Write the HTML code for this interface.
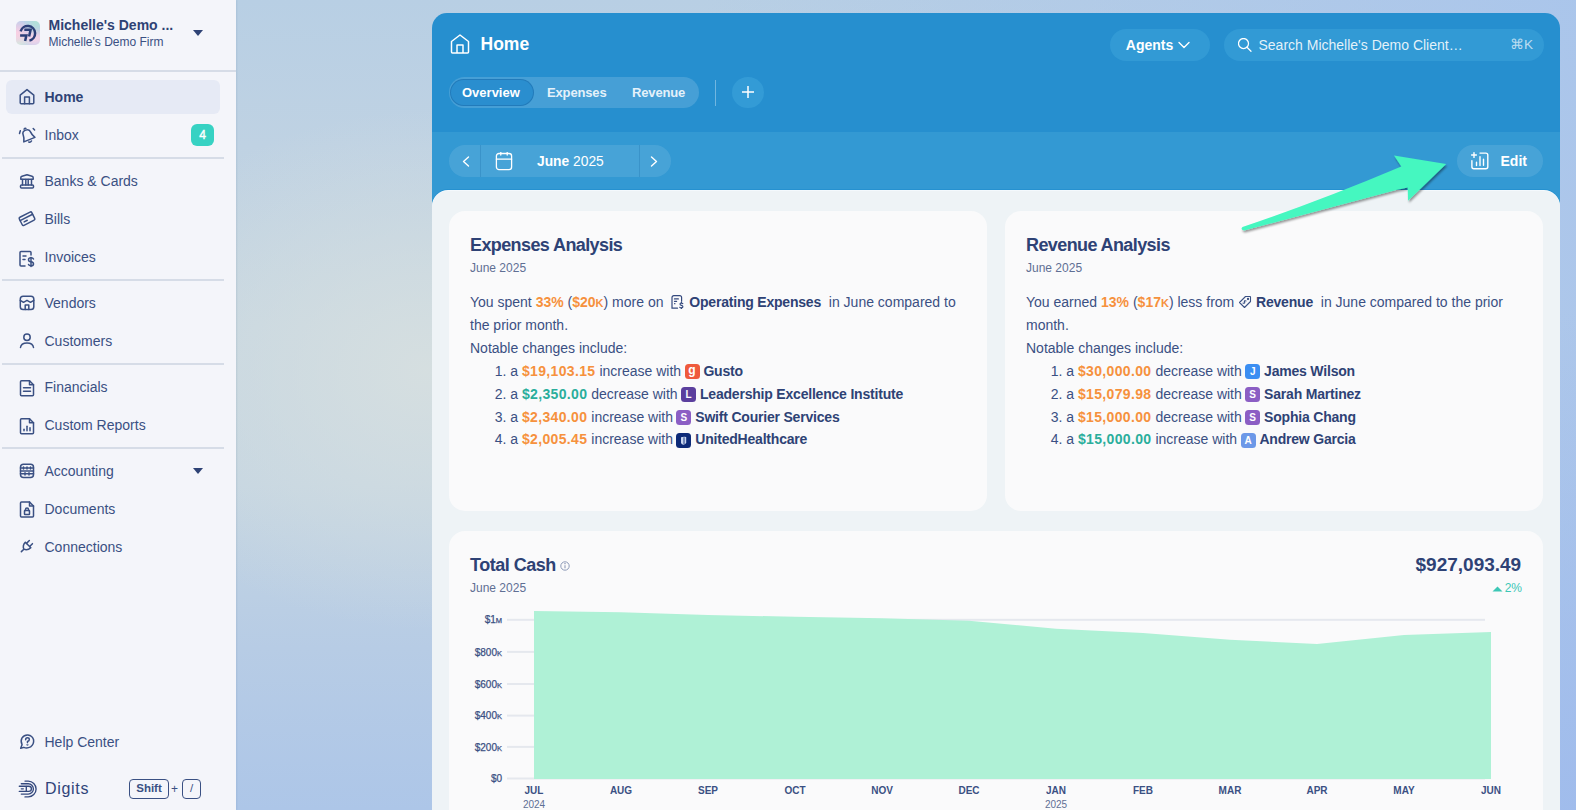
<!DOCTYPE html>
<html><head><meta charset="utf-8">
<style>
*{box-sizing:border-box;margin:0;padding:0}
html,body{width:1576px;height:810px;overflow:hidden}
body{font-family:"Liberation Sans",sans-serif;color:#344a7c;position:relative;
background:#bccfe3}
.bg{position:absolute;left:236px;top:0;width:1340px;height:810px;
background:
radial-gradient(ellipse 500px 500px at 1340px 810px, rgba(158,186,236,0.8) 0%, rgba(158,186,236,0) 100%),
linear-gradient(90deg, rgba(168,196,236,0) 35%, rgba(168,196,236,0.85) 100%),
radial-gradient(ellipse 330px 260px at 190px 370px, rgba(214,223,224,0.95) 0%, rgba(214,223,224,0) 100%),
linear-gradient(180deg,#b8cfe4 0%,#bfd2e3 18%,#c6d6e1 40%,#c4d5e2 60%,#b7cce5 80%,#adc6e8 100%);}
.bgr{position:absolute;left:1560px;top:0;width:16px;height:810px;background:linear-gradient(180deg,#b2c9e8,#a5bfea 50%,#9fbaec)}
.side{position:absolute;left:0;top:0;width:236px;height:810px;background:#f4f5fa;box-shadow:1px 0 1.5px rgba(70,110,150,0.12)}
.abs{position:absolute}
.hr{position:absolute;left:2px;width:222px;height:2px;background:#d6dce7}
.nav{position:absolute;left:44.5px;font-size:14px;color:#3a5083;line-height:14px;white-space:nowrap}
.ico{position:absolute;left:18px;width:18px;height:18px}
.panel{position:absolute;left:432px;top:13px;width:1128px;height:820px;border-radius:15px 15px 0 0;background:#268fcf;overflow:hidden}
.band{position:absolute;left:0;top:119px;width:1128px;height:80px;background:#3399d3}
.content{position:absolute;left:0;top:178px;width:1128px;height:700px;background:#eef3f6;border-radius:16px 16px 0 0;box-shadow:0 -1px 0 rgba(255,255,255,0.95),0 -2px 0 #2691d0}
.card{position:absolute;background:#fafafb;border-radius:16px}
.w{color:#fff}
.ttl{position:absolute;font-size:18px;line-height:18px;font-weight:bold;color:#2e4275;letter-spacing:-0.6px;white-space:nowrap}
.sub{position:absolute;font-size:12px;line-height:12px;color:#5f6f94;white-space:nowrap}
.body{position:absolute;font-size:14px;line-height:22.9px;color:#3a5083;white-space:nowrap}
.body b{font-weight:bold}
.o{color:#f6913d}
.g{color:#2aae9c}
.n{color:#2e4275;letter-spacing:-0.2px}
.li{padding-left:24.7px}
.li .o,.li .g{letter-spacing:0.35px}
.av{display:inline-block;overflow:hidden;width:15px;height:15px;margin-left:-0.5px;border-radius:3.5px;color:#fff;font-size:10px;font-weight:bold;line-height:15px;text-align:center;vertical-align:-3.3px}
.ic{vertical-align:-2px}

.kbd{border:1.3px solid #3a5083;border-radius:4px;font-size:11.5px;font-weight:bold;color:#3a5083;text-align:center;line-height:17px}
</style></head><body>
<div class="bg"></div>

<div class="side">
  <div class="abs" style="left:16.3px;top:21px;width:23.6px;height:23.8px;border-radius:5px;overflow:hidden;background:
radial-gradient(circle at 85% 5%, rgba(176,226,214,0.95) 0%, rgba(176,226,214,0) 45%),
radial-gradient(circle at 5% 50%, rgba(250,208,226,1) 0%, rgba(250,208,226,0) 55%),
radial-gradient(circle at 10% 95%, rgba(206,236,222,1) 0%, rgba(206,236,222,0) 40%),
radial-gradient(circle at 75% 70%, rgba(245,212,232,1) 0%, rgba(245,212,232,0) 45%),
linear-gradient(180deg,#bcd0ec 0%,#c6c8ec 40%,#ead2e8 70%,#c9d0ee 100%)">
    <svg width="24" height="24" viewBox="0 0 24 24" style="position:absolute;left:0;top:0" fill="none" stroke="#2c3f78" stroke-width="2.5"><path d="M4.6 10.3 A7.4 7.4 0 1 1 13.4 19.6"/><path d="M8.3 8.8 H14.6 L13.1 15.6"/><path d="M4.1 14.4 H10.4 L9.1 20"/></svg>
  </div>
  <div class="abs" style="left:48.5px;top:17.95px;font-size:14px;font-weight:bold;color:#2e4275;line-height:14px;white-space:nowrap">Michelle's Demo ...</div>
  <div class="abs" style="left:48.5px;top:35.84px;font-size:12px;color:#3a5083;line-height:12px;white-space:nowrap">Michelle's Demo Firm</div>
  <svg class="abs" style="left:192px;top:29px" width="12" height="8" viewBox="0 0 12 8"><path d="M1 1 L11 1 L6 7 Z" fill="#2e4275"/></svg>
  <div class="abs" style="left:0;top:70px;width:236px;height:2px;background:#d6dce7"></div>
  <div class="abs" style="left:6px;top:80px;width:214px;height:34px;border-radius:6px;background:#e6eaf5"></div>
  <div class="hr" style="top:157px"></div>
  <div class="hr" style="top:279px"></div>
  <div class="hr" style="top:363px"></div>
  <div class="hr" style="top:447px"></div>
  <div class="nav" style="top:90.35px;font-weight:bold;color:#2e4275">Home</div>
  <div class="nav" style="top:128.35px">Inbox</div>
  <div class="abs" style="left:191px;top:124px;width:23px;height:22px;border-radius:6px;background:#37d2c3;color:#fff;font-size:12px;-webkit-text-stroke:0.4px #fff;text-align:center;line-height:23.5px">4</div>
  <div class="nav" style="top:174.35px">Banks &amp; Cards</div>
  <div class="nav" style="top:212.35px">Bills</div>
  <div class="nav" style="top:250.35px">Invoices</div>
  <div class="nav" style="top:296.35px">Vendors</div>
  <div class="nav" style="top:334.35px">Customers</div>
  <div class="nav" style="top:380.35px">Financials</div>
  <div class="nav" style="top:418.35px">Custom Reports</div>
  <div class="nav" style="top:464.35px">Accounting</div>
  <svg class="abs" style="left:192px;top:467px" width="12" height="8" viewBox="0 0 12 8"><path d="M1 1 L11 1 L6 7 Z" fill="#2e4275"/></svg>
  <div class="nav" style="top:502.35px">Documents</div>
  <div class="nav" style="top:540.35px">Connections</div>
  <div class="nav" style="top:735.1px">Help Center</div>
  <div class="abs" style="left:45px;top:780.6px;font-size:16px;color:#3a5083;line-height:16px;letter-spacing:0.7px;color:#2f4479">Digits</div>
  <div class="abs kbd" style="left:129px;top:779px;width:40px;height:20px">Shift</div>
  <div class="abs" style="left:171px;top:780px;font-size:12px;line-height:18px;color:#3a5083">+</div>
  <div class="abs kbd" style="left:182px;top:779px;width:19px;height:20px;font-weight:normal">/</div>
  <svg class="abs" style="left:0;top:0" width="236" height="810" viewBox="0 0 236 810" fill="none" stroke="#3a5083" stroke-width="1.5" stroke-linecap="round" stroke-linejoin="round">
    <!-- home -->
    <path d="M20.2 95.2 L27 89.6 L33.8 95.2 V102.8 a1 1 0 0 1 -1 1 H21.2 a1 1 0 0 1 -1 -1 Z"/><path d="M24.6 103.8 V97 H29.4 V103.8"/>
    <!-- bell -->
    <g transform="rotate(-22 27.5 135)"><path d="M21.5 140 Q23.5 136.5 23.5 133.5 Q23.5 129.8 27.5 129.8 Q31.5 129.8 31.5 133.5 Q31.5 136.5 33.5 140 Z"/><path d="M26 142 Q27.5 143.2 29 142"/><path d="M26.5 128.3 Q27.5 127.6 28.5 128.3"/></g><path d="M19.5 133.5 L20.3 130.8"/><path d="M33.2 128.5 L34.6 130"/>
    <!-- bank -->
    <path d="M20.8 179.3 V177.8 Q20.8 176.6 22 176.2 L27 174.8 L32 176.2 Q33.2 176.6 33.2 177.8 V179.3 Z"/><path d="M22.5 179.5 V185"/><path d="M25.8 179.5 V185"/><path d="M28.2 179.5 V185"/><path d="M31.5 179.5 V185"/><rect x="20.5" y="185" width="13" height="3" rx="1"/>
    <!-- card -->
    <g transform="rotate(-27 27 218.7)"><rect x="20" y="214.2" width="14" height="9" rx="1.3"/><path d="M20 217.3 H34"/><path d="M23 220.2 H26.5"/></g>
    <!-- invoice -->
    <path d="M31 255 V252.5 a1 1 0 0 0 -1 -1 H21 a1 1 0 0 0 -1 1 V265 a1 1 0 0 0 1 1 H25"/><path d="M23 256 H26"/><path d="M23 259.5 H25"/><path d="M31 257.5 V266.5"/><path d="M33.5 259 Q33 257.8 31 257.8 Q28.5 257.8 28.5 259.7 Q28.5 261.5 31 261.8 Q33.5 262.2 33.5 264 Q33.5 265.8 31 265.8 Q29 265.8 28.5 264.5"/>
    <!-- vendors -->
    <rect x="20.3" y="296.3" width="13.5" height="13.2" rx="2.8"/><path d="M20.3 300.3 L23.5 302.3 L27 300.3 L30.5 302.3 L33.8 300.3"/><path d="M25.2 309.5 V305 H28.8 V309.5"/>
    <!-- customers -->
    <circle cx="27" cy="337.2" r="3.2"/><path d="M20.5 347.5 Q21 343 27 343 Q33 343 33.5 347.5"/>
    <g transform="translate(0,-1.3)"><!-- financials -->
    <path d="M29.5 382 H21.5 a1 1 0 0 0 -1 1 V396 a1 1 0 0 0 1 1 H32.5 a1 1 0 0 0 1 -1 V386 Z"/><path d="M29.5 382 V386 H33.5"/><path d="M23.5 389 H30.5"/><path d="M23.5 392.5 H30.5"/>
    <!-- custom reports -->
    <path d="M29.5 420 H21.5 a1 1 0 0 0 -1 1 V434 a1 1 0 0 0 1 1 H32.5 a1 1 0 0 0 1 -1 V424 Z"/><path d="M29.5 420 V424 H33.5"/><path d="M24 432 V430.5"/><path d="M27 432 V427.5"/><path d="M30 432 V429"/>
    </g><!-- accounting -->
    <rect x="20.5" y="464.3" width="13" height="13.2" rx="3"/><path d="M20.5 468 H33.5"/><path d="M20.5 470.9 H33.5"/><path d="M20.5 473.8 H33.5"/><path d="M23.5 467 V469"/><path d="M27 467 V469"/><path d="M30.5 467 V469"/><path d="M25 472.8 V475"/><path d="M29 472.8 V475"/>
    <!-- documents -->
    <path d="M29.5 502 H21.5 a1 1 0 0 0 -1 1 V516 a1 1 0 0 0 1 1 H32.5 a1 1 0 0 0 1 -1 V506 Z"/><path d="M29.5 502 V506 H33.5"/><rect x="24.5" y="510.5" width="5" height="4" rx="0.5"/><path d="M25.5 510.5 V509.5 a1.5 1.5 0 0 1 3 0 V510.5"/>
    <!-- connections -->
    <g transform="rotate(-45 27.5 545.5)"><path d="M18.8 545.5 H22.3"/><path d="M22.3 545.5 Q23.8 541.8 28.3 541.6 V549.4 Q23.8 549.2 22.3 545.5 Z"/><path d="M28.3 543.3 H32.3 M28.3 547.7 H32.3"/></g>
    <!-- help --><g transform="translate(27 741.6) scale(0.9) translate(-27 -741.6)" stroke-width="1.65">
    <path d="M20 749 L21.5 745 Q19.5 741 21.5 737.5 Q24 734 28 734.3 Q33 735 34.3 739.5 Q35 744.5 31 747.5 Q27 749.5 23.5 748 Z"/><path d="M25.5 739.5 Q25.5 737.3 27.5 737.3 Q29.6 737.3 29.6 739.2 Q29.6 740.8 27.5 741.5 V742.5"/><circle cx="27.5" cy="745" r="0.3" fill="#3a5083"/>
  </g></svg>
  <svg class="abs" style="left:0;top:770px" width="40" height="30" viewBox="0 770 40 30" fill="none" stroke="#34497e" stroke-width="1.35" stroke-linecap="round">
    <path d="M25 781.1 H28.2 A7.9 7.9 0 0 1 28.2 796.9 H25"/><path d="M21.3 783.7 H28.2 A5.2 5.2 0 0 1 28.2 794.1 H21.3"/><path d="M19.3 786.2 H28.8 A2.6 2.6 0 0 1 28.8 791.4 H19.3"/><path d="M21.3 788.8 H23.3"/><path d="M26.3 786.5 V791"/>
  </svg>
</div>
<div class="panel">
  <div class="band"></div>
  <svg class="abs" style="left:18px;top:21px" width="20" height="20" viewBox="0 0 20 20" fill="none" stroke="#fff" stroke-width="1.5" stroke-linejoin="round"><path d="M1.5 7.5 L10 1 L18.5 7.5 V18 a1 1 0 0 1 -1 1 H2.5 a1 1 0 0 1 -1 -1 Z"/><path d="M7 19 V11 H13 V19"/></svg>
  <div class="abs w" style="left:48.5px;top:23.2px;font-size:17.5px;line-height:17.5px;font-weight:bold">Home</div>
  <div class="abs" style="left:17px;top:64px;width:250px;height:31px;border-radius:16px;background:rgba(255,255,255,0.15)"></div>
  <div class="abs" style="left:18px;top:66px;width:84px;height:27px;border-radius:14px;background:#2a8ecf;border:1px solid rgba(20,90,150,0.35)"></div>
  <div class="abs w" style="left:30px;top:73.4px;font-size:13px;line-height:13px;font-weight:bold">Overview</div>
  <div class="abs" style="left:115px;top:73.4px;font-size:13px;line-height:13px;font-weight:bold;color:#e4f1fa;letter-spacing:-0.15px">Expenses</div>
  <div class="abs" style="left:200px;top:73.4px;font-size:13px;line-height:13px;font-weight:bold;color:#e4f1fa;letter-spacing:-0.15px">Revenue</div>
  <div class="abs" style="left:283px;top:67px;width:1px;height:26px;background:rgba(255,255,255,0.35)"></div>
  <div class="abs" style="left:300px;top:63.8px;width:32px;height:31.5px;border-radius:50%;background:#339bd6"></div>
  <svg class="abs" style="left:310px;top:73px" width="12" height="12" viewBox="0 0 12 12" stroke="#fff" stroke-width="1.5" stroke-linecap="butt"><path d="M6 0 V12 M0 6 H12"/></svg>
  <div class="abs" style="left:678px;top:16px;width:100px;height:32px;border-radius:16px;background:#329ad5"></div>
  <div class="abs w" style="left:693.8px;top:24.9px;font-size:14px;line-height:14px;font-weight:bold">Agents</div>
  <svg class="abs" style="left:745.8px;top:28.3px" width="12" height="8" viewBox="0 0 12 8" fill="none" stroke="#fff" stroke-width="1.4" stroke-linecap="round" stroke-linejoin="round"><path d="M1 1.5 L6 6.5 L11 1.5"/></svg>
  <div class="abs" style="left:792px;top:16px;width:320px;height:32px;border-radius:16px;background:#329ad5"></div>
  <svg class="abs" style="left:806px;top:25px" width="15" height="15" viewBox="0 0 15 15" fill="none" stroke="#fff" stroke-width="1.25" stroke-linecap="round"><circle cx="5.5" cy="5.5" r="5"/><path d="M9 9.2 L13 13.3"/></svg>
  <div class="abs" style="left:826.5px;top:24.7px;font-size:14px;line-height:14px;color:rgba(255,255,255,0.88);white-space:nowrap">Search Michelle's Demo Client…</div>
  <div class="abs" style="left:1078px;top:24.9px;font-size:13.6px;line-height:14px;color:rgba(255,255,255,0.68)">⌘K</div>
  <div class="abs" style="left:17px;top:132px;width:222px;height:32px;border-radius:16px;background:rgba(255,255,255,0.1)"></div>
  <div class="abs" style="left:48px;top:132px;width:1px;height:32px;background:rgba(20,100,160,0.25)"></div>
  <div class="abs" style="left:207px;top:132px;width:1px;height:32px;background:rgba(20,100,160,0.25)"></div>
  <svg class="abs" style="left:30px;top:143px" width="8" height="11" viewBox="0 0 8 11" fill="none" stroke="#fff" stroke-width="1.4" stroke-linecap="round" stroke-linejoin="round"><path d="M6.5 1 L1.5 5.5 L6.5 10"/></svg>
  <svg class="abs" style="left:218px;top:143px" width="8" height="11" viewBox="0 0 8 11" fill="none" stroke="#fff" stroke-width="1.4" stroke-linecap="round" stroke-linejoin="round"><path d="M1.5 1 L6.5 5.5 L1.5 10"/></svg>
  <svg class="abs" style="left:63px;top:139px" width="18" height="19" viewBox="0 0 18 19" fill="none" stroke="#fff" stroke-width="1.3" stroke-linecap="round"><rect x="1.4" y="1.5" width="15.2" height="16.1" rx="2.6"/><path d="M1.4 7.2 H16.6"/><path d="M5.8 0.3 V3"/><path d="M12.2 0.3 V3"/></svg>
  <div class="abs w" style="left:105px;top:141.6px;font-size:13.8px;line-height:14px;white-space:nowrap"><b>June</b> 2025</div>
  <div class="abs" style="left:1025px;top:132px;width:86px;height:32px;border-radius:16px;background:rgba(255,255,255,0.1)"></div>
  <svg class="abs" style="left:1038px;top:138px" width="20" height="20" viewBox="0 0 20 20" fill="none" stroke="#fff" stroke-width="1.4" stroke-linecap="round"><path d="M10 2.1 H15.8 a2 2 0 0 1 2 2 V15.7 a2 2 0 0 1 -2 2 H3.9 a2 2 0 0 1 -2 -2 V9.6"/><path d="M4 1.6 V6.4 M1.6 4 H6.4"/><path d="M6.5 11.3 V14.5 M10 5.6 V14.5 M13.5 8.3 V14.2"/></svg>
  <div class="abs w" style="left:1068.5px;top:140.8px;font-size:14px;line-height:14px;font-weight:bold">Edit</div>
  <div class="content">
    <div class="card" style="left:17px;top:20px;width:538px;height:300px">
      <div class="ttl" style="left:21px;top:24.6px">Expenses Analysis</div>
      <div class="sub" style="left:21px;top:50.8px">June 2025</div>
      <div class="body" style="left:21px;top:80px">
        <div>You spent <b class="o">33%</b> (<b class="o">$20<span style="font-size:11px;line-height:1px">K</span></b>) more on <svg class="ic" style="margin-left:3.5px;margin-right:1.5px" width="13" height="14" viewBox="0 0 13 14" fill="none" stroke="#34497e" stroke-width="1.2" stroke-linecap="round"><path d="M10.6 6.2 V2.5 a1.8 1.8 0 0 0 -1.8 -1.8 H2.8 a1.8 1.8 0 0 0 -1.8 1.8 V13.2 H6.5"/><path d="M3.5 3.9 H7.3" stroke-width="1.4"/><path d="M3.5 6.3 H5.6"/><path d="M3.6 8.7 H3.9"/><path d="M11.8 8.6 Q11.3 8 10.3 8 Q9 8 9 9.1 Q9 10.1 10.4 10.4 Q11.9 10.7 11.9 11.8 Q11.9 12.9 10.4 12.9 Q9.3 12.9 8.8 12.3"/><path d="M10.4 7.2 V8 M10.4 12.9 V13.6"/></svg> <b class="n">Operating Expenses</b> &nbsp;in June compared to</div>
        <div>the prior month.</div>
        <div>Notable changes include:</div>
        <div class="li">1. a <b class="o">$19,103.15</b> increase with <span class="av" style="background:#ef5a3c;font-size:12px;line-height:13px">g</span> <b class="n">Gusto</b></div>
        <div class="li">2. a <b class="g">$2,350.00</b> decrease with <span class="av" style="background:#5b3f9e">L</span> <b class="n">Leadership Excellence Institute</b></div>
        <div class="li">3. a <b class="o">$2,340.00</b> increase with <span class="av" style="background:#8b5ec4">S</span> <b class="n">Swift Courier Services</b></div>
        <div class="li">4. a <b class="o">$2,005.45</b> increase with <span class="av" style="background:#0d2a78"><svg width="15" height="15" viewBox="0 0 15 15" style="display:block"><path d="M5 4.2 Q8 3.4 10.2 4 V9.5 Q10 11.5 7.2 11.8 Q5 11.6 5 9.5 Z" fill="#c9d6ee"/><path d="M8 4.3 V11" stroke="#0d2a78" stroke-width="0.9"/></svg></span> <b class="n">UnitedHealthcare</b></div>
      </div>
    </div>
    <div class="card" style="left:573px;top:20px;width:538px;height:300px">
      <div class="ttl" style="left:21px;top:24.6px">Revenue Analysis</div>
      <div class="sub" style="left:21px;top:50.8px">June 2025</div>
      <div class="body" style="left:21px;top:80px">
        <div>You earned <b class="o">13%</b> (<b class="o">$17<span style="font-size:11px;line-height:1px">K</span></b>) less from <svg class="ic" width="14" height="14" viewBox="0 0 14 14" fill="none" stroke="#3a5083" stroke-width="1.1" stroke-linecap="round" stroke-linejoin="round"><path d="M7.5 1.5 H12 a0.5 0.5 0 0 1 0.5 0.5 V6.5 L6.5 12.5 L1.5 7.5 Z"/><circle cx="10" cy="4" r="0.6"/><path d="M8 6 Q7.5 5.5 6.8 5.8 Q6 6.2 6.5 7 Q7 7.5 6.5 8 Q5.8 8.5 5 8"/></svg> <b class="n">Revenue</b> &nbsp;in June compared to the prior</div>
        <div>month.</div>
        <div>Notable changes include:</div>
        <div class="li">1. a <b class="o">$30,000.00</b> decrease with <span class="av" style="background:#3b8ef2">J</span> <b class="n">James Wilson</b></div>
        <div class="li">2. a <b class="o">$15,079.98</b> decrease with <span class="av" style="background:#8b5ec4">S</span> <b class="n">Sarah Martinez</b></div>
        <div class="li">3. a <b class="o">$15,000.00</b> decrease with <span class="av" style="background:#8b5ec4">S</span> <b class="n">Sophia Chang</b></div>
        <div class="li">4. a <b class="g">$15,000.00</b> increase with <span class="av" style="background:#6c98e8">A</span> <b class="n">Andrew Garcia</b></div>
      </div>
    </div>
    <div class="card" style="left:17px;top:340px;width:1094px;height:400px">
      <div class="ttl" style="left:21px;top:25.1px;font-size:18px;line-height:18px;letter-spacing:-0.5px">Total Cash</div>
      <svg class="abs" style="left:111px;top:30px" width="10" height="10" viewBox="0 0 10 10" fill="none" stroke="#8d9ab8" stroke-width="1"><circle cx="5" cy="5" r="4.2"/><path d="M5 4.3 V7.3" stroke-width="1.1"/><circle cx="5" cy="2.8" r="0.3" fill="#8d9ab8"/></svg>
      <div class="sub" style="left:21px;top:51.2px">June 2025</div>
      <div class="ttl" style="right:21.8px;top:23.9px;font-size:19px;line-height:19px;letter-spacing:0">$927,093.49</div>
      <div class="abs" style="right:21px;top:50.8px;font-size:12px;line-height:12px;color:#3cc7b6;white-space:nowrap"><svg width="11" height="6" viewBox="0 0 11 6" style="vertical-align:-0.5px;margin-right:2px"><path d="M0.5 5.5 L5.5 0.6 L10.5 5.5 Z" fill="#3cc7b6"/></svg>2%</div>
    </div>
  </div>
</div>
<svg class="abs" style="left:0;top:0;z-index:5;pointer-events:none" width="1576" height="810" viewBox="0 0 1576 810">
<rect x="507" y="618.8" width="978" height="2" fill="#e5e8ee"/>
<rect x="507" y="650.9" width="978" height="2" fill="#e5e8ee"/>
<rect x="507" y="683" width="978" height="2" fill="#e5e8ee"/>
<rect x="507" y="714.6" width="978" height="2" fill="#e5e8ee"/>
<rect x="507" y="745.9" width="978" height="2" fill="#e5e8ee"/>
<rect x="507" y="777.5" width="978" height="2" fill="#e5e8ee"/>
<path d="M534 779 L534 611 L621 612.2 L708 615 L795 616.8 L882 618.2 L969 620.7 L1056 628.7 L1143 633 L1230 639.8 L1317 643.9 L1404 635.1 L1491 632 L1491 779 Z" fill="#aff1d6"/>
<text x="502" y="623.4" text-anchor="end" font-family="Liberation Sans" font-size="10" fill="#3a5083" stroke="#3a5083" stroke-width="0.25">$1<tspan font-size="7.5">M</tspan></text>
<text x="502" y="655.5" text-anchor="end" font-family="Liberation Sans" font-size="10" fill="#3a5083" stroke="#3a5083" stroke-width="0.25">$800<tspan font-size="7.5">K</tspan></text>
<text x="502" y="687.6" text-anchor="end" font-family="Liberation Sans" font-size="10" fill="#3a5083" stroke="#3a5083" stroke-width="0.25">$600<tspan font-size="7.5">K</tspan></text>
<text x="502" y="719.2" text-anchor="end" font-family="Liberation Sans" font-size="10" fill="#3a5083" stroke="#3a5083" stroke-width="0.25">$400<tspan font-size="7.5">K</tspan></text>
<text x="502" y="750.5" text-anchor="end" font-family="Liberation Sans" font-size="10" fill="#3a5083" stroke="#3a5083" stroke-width="0.25">$200<tspan font-size="7.5">K</tspan></text>
<text x="502" y="782.1" text-anchor="end" font-family="Liberation Sans" font-size="10" fill="#3a5083" stroke="#3a5083" stroke-width="0.25">$0</text>
<text x="534" y="794.3" text-anchor="middle" font-family="Liberation Sans" font-weight="bold" font-size="10" fill="#3a5083">JUL</text>
<text x="621" y="794.3" text-anchor="middle" font-family="Liberation Sans" font-weight="bold" font-size="10" fill="#3a5083">AUG</text>
<text x="708" y="794.3" text-anchor="middle" font-family="Liberation Sans" font-weight="bold" font-size="10" fill="#3a5083">SEP</text>
<text x="795" y="794.3" text-anchor="middle" font-family="Liberation Sans" font-weight="bold" font-size="10" fill="#3a5083">OCT</text>
<text x="882" y="794.3" text-anchor="middle" font-family="Liberation Sans" font-weight="bold" font-size="10" fill="#3a5083">NOV</text>
<text x="969" y="794.3" text-anchor="middle" font-family="Liberation Sans" font-weight="bold" font-size="10" fill="#3a5083">DEC</text>
<text x="1056" y="794.3" text-anchor="middle" font-family="Liberation Sans" font-weight="bold" font-size="10" fill="#3a5083">JAN</text>
<text x="1143" y="794.3" text-anchor="middle" font-family="Liberation Sans" font-weight="bold" font-size="10" fill="#3a5083">FEB</text>
<text x="1230" y="794.3" text-anchor="middle" font-family="Liberation Sans" font-weight="bold" font-size="10" fill="#3a5083">MAR</text>
<text x="1317" y="794.3" text-anchor="middle" font-family="Liberation Sans" font-weight="bold" font-size="10" fill="#3a5083">APR</text>
<text x="1404" y="794.3" text-anchor="middle" font-family="Liberation Sans" font-weight="bold" font-size="10" fill="#3a5083">MAY</text>
<text x="1491" y="794.3" text-anchor="middle" font-family="Liberation Sans" font-weight="bold" font-size="10" fill="#3a5083">JUN</text>
<text x="534" y="808" text-anchor="middle" font-family="Liberation Sans" font-size="10" fill="#5f6f94">2024</text>
<text x="1056" y="808" text-anchor="middle" font-family="Liberation Sans" font-size="10" fill="#5f6f94">2025</text>
</svg>
<svg class="abs" style="left:0;top:0;z-index:10;pointer-events:none" width="1576" height="810" viewBox="0 0 1576 810">
<defs><filter id="sh" x="-10%" y="-30%" width="130%" height="160%"><feGaussianBlur in="SourceAlpha" stdDeviation="1"/><feOffset dx="0.5" dy="1.5" result="b"/><feFlood flood-color="#000" flood-opacity="0.4"/><feComposite in2="b" operator="in"/><feMerge><feMergeNode/><feMergeNode in="SourceGraphic"/></feMerge></filter></defs>
<path filter="url(#sh)" d="M1242.5 227 Q1321 200.5 1401.3 166.5 L1394 155.4 L1446.2 163.9 L1408.1 200.8 L1407.7 187.5 Q1402 189 1397 189.8 L1244 230.5 Q1240 229.5 1242.5 227 Z" fill="#45f7c0"/>
</svg>
</body></html>
